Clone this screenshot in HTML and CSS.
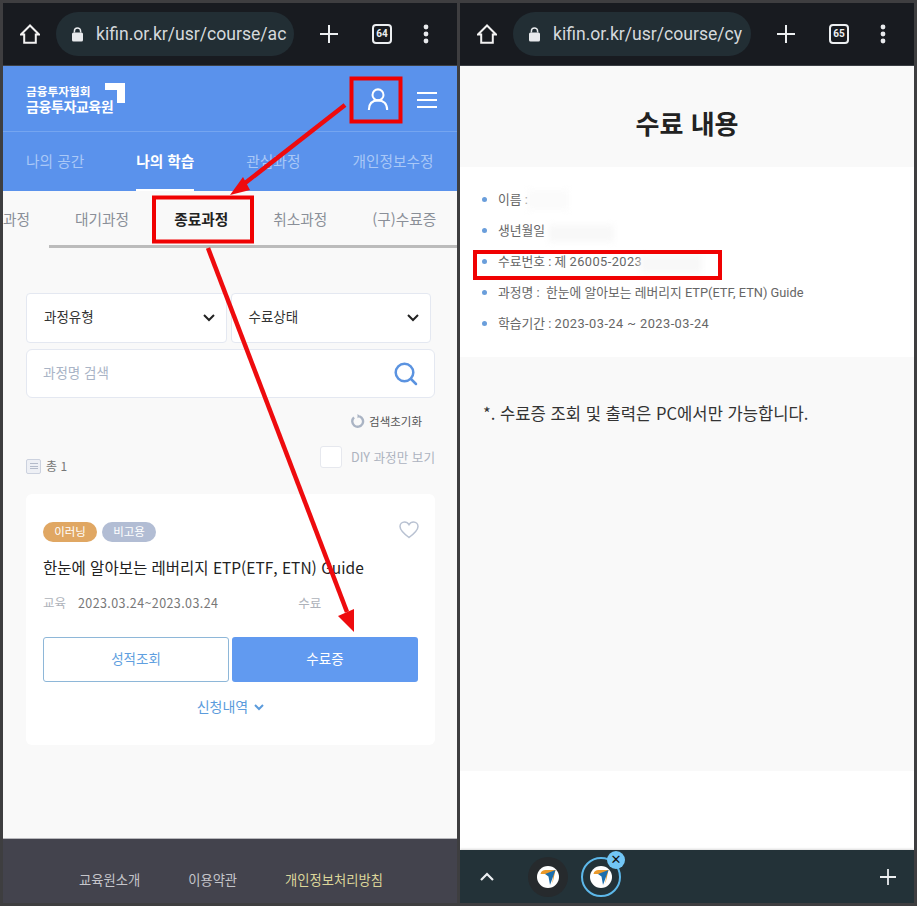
FILE: index.html
```html
<!DOCTYPE html>
<html lang="ko">
<head>
<meta charset="utf-8">
<title>수료 내용</title>
<link rel="stylesheet" href="styles.css">
</head>
<body>
<svg width="0" height="0" class="defs">
  <defs>
    <g id="home"><path d="M10 1.500 1 10.500h3.200v8.200h11.600v-8.200H19z" fill="none" stroke="#f2f2f2" stroke-width="2" stroke-linejoin="miter"/></g>
    <g id="lock"><path d="M3.400 5.500V4a3.100 3.100 0 0 1 6.200 0v1.500" fill="none" stroke="#e8eaed" stroke-width="1.500"/><rect x="1" y="5.500" width="11" height="9" rx="1.500" fill="#e8eaed"/></g>
    <g id="plus"><path d="M9 0v18M0 9h18" stroke="#eceff1" stroke-width="2" fill="none"/></g>
    <g id="dots"><circle cx="3" cy="3" r="2.400" fill="#e8eaed"/><circle cx="3" cy="10" r="2.400" fill="#e8eaed"/><circle cx="3" cy="17" r="2.400" fill="#e8eaed"/></g>
    <g id="fav"><circle cx="11" cy="11" r="11" fill="#fff"/><path d="M3.500 8C4 5 6 4 8.500 4h10L16 15l-2.500 5c2-3 3-8 2-12H8z" fill="#ea9a2c"/><path d="M18.500 4 13 19l-1.500-8.500L8 8z" fill="#1d6fae"/></g>
    <g id="chev"><path d="M1 1l5 5 5-5" fill="none" stroke="#222" stroke-width="2"/></g>
  </defs>
</svg>

<main class="shots">
  <section class="phone">
    <header class="toolbar">
      <svg class="ic-home" width="20" height="20" viewBox="0 0 20 20"><use href="#home"/></svg>
      <div class="url">
        <svg class="ic-lock" width="13" height="15" viewBox="0 0 13 15"><use href="#lock"/></svg>
        <span class="url-text">kifin.or.kr/usr/course/ac</span>
      </div>
      <svg class="ic-plus" width="18" height="18" viewBox="0 0 18 18"><use href="#plus"/></svg>
      <span class="tabcount">64</span>
      <svg class="ic-dots" width="6" height="20" viewBox="0 0 6 20"><use href="#dots"/></svg>
    </header>

    <div class="site-head">
      <div class="logo">
        <div class="logo-text">
          <span class="logo-small">금융투자협회</span>
          <span class="logo-big">금융투자교육원</span>
        </div>
        <svg class="logo-mark" width="20" height="20" viewBox="0 0 20 20"><path d="M0 0h20v20h-8V7H0z" fill="#fff"/></svg>
      </div>
      <div class="head-icons">
        <svg width="22" height="22" viewBox="0 0 24 24" fill="none" stroke="#fff" stroke-width="2.200"><circle cx="12" cy="7.500" r="6"/><path d="M2 24c0-7 4-10.500 10-10.500S22 17 22 24"/></svg>
        <div class="burger"><i></i><i></i><i></i></div>
      </div>
    </div>

    <nav class="main-nav">
      <a>나의 공간</a>
      <a class="on">나의 학습</a>
      <a>관심과정</a>
      <a>개인정보수정</a>
    </nav>

    <div class="sub-wrap">
      <nav class="sub-nav">
        <a class="clip">수강과정</a>
        <a>대기과정</a>
        <a class="on">종료과정</a>
        <a>취소과정</a>
        <a>(구)수료증</a>
      </nav>
      <div class="sub-bar"></div>
    </div>

    <div class="content">
      <div class="selects">
        <div class="select"><span>과정유형</span><svg width="12" height="8" viewBox="0 0 12 8"><use href="#chev"/></svg></div>
        <div class="select"><span>수료상태</span><svg width="12" height="8" viewBox="0 0 12 8"><use href="#chev"/></svg></div>
      </div>
      <div class="search">
        <span>과정명 검색</span>
        <svg width="24" height="24" viewBox="0 0 24 24" fill="none" stroke="#5b93e0" stroke-width="2.500"><circle cx="10.500" cy="10.500" r="8.800"/><path d="M17 17l5 5" stroke-linecap="round"/></svg>
      </div>
      <div class="reset">
        <svg width="14" height="14" viewBox="0 0 14 14" fill="none" stroke="#aab4c4" stroke-width="2.400"><path d="M8.500 2.300A5.400 5.400 0 1 1 3 3.400"/><path d="M6.500 0l3 2.300-3 2z" fill="#aab4c4" stroke="none"/></svg>
        <span>검색초기화</span>
      </div>
      <div class="tools">
        <div class="total">
          <span class="total-ic"><i></i><i></i><i></i></span>
          <span>총 1</span>
        </div>
        <div class="diy"><span class="check"></span><span>DIY 과정만 보기</span></div>
      </div>

      <article class="card">
        <div class="card-top">
          <div class="tags"><span class="tag t1">이러닝</span><span class="tag t2">비고용</span></div>
          <svg class="heart" width="20" height="18" viewBox="0 0 20 18" fill="none" stroke="#b9c2d2" stroke-width="1.500"><path d="M10 16.500C4 12 1 9 1 5.500 1 3 3 1 5.500 1 7.500 1 9 2 10 3.700 11 2 12.500 1 14.500 1 17 1 19 3 19 5.500 19 9 16 12 10 16.500z"/></svg>
        </div>
        <h2 class="card-title">한눈에 알아보는 레버리지 ETP(ETF, ETN) Guide</h2>
        <div class="meta">
          <span class="meta-k">교육</span><span class="meta-v">2023.03.24~2023.03.24</span><span class="meta-k meta-end">수료</span>
        </div>
        <div class="actions">
          <a class="btn line">성적조회</a>
          <a class="btn fill">수료증</a>
        </div>
        <a class="more">신청내역<svg width="10" height="7" viewBox="0 0 10 7"><path d="M1 1l4 4 4-4" fill="none" stroke="#5b9bdc" stroke-width="2"/></svg></a>
      </article>
    </div>

    <footer class="site-foot">
      <a>교육원소개</a><a>이용약관</a><a class="hi">개인정보처리방침</a>
    </footer>
  </section>

  <section class="phone">
    <header class="toolbar">
      <svg class="ic-home" width="20" height="20" viewBox="0 0 20 20"><use href="#home"/></svg>
      <div class="url">
        <svg class="ic-lock" width="13" height="15" viewBox="0 0 13 15"><use href="#lock"/></svg>
        <span class="url-text">kifin.or.kr/usr/course/cy</span>
      </div>
      <svg class="ic-plus" width="18" height="18" viewBox="0 0 18 18"><use href="#plus"/></svg>
      <span class="tabcount">65</span>
      <svg class="ic-dots" width="6" height="20" viewBox="0 0 6 20"><use href="#dots"/></svg>
    </header>

    <div class="cert-title"><h1>수료 내용</h1></div>
    <ul class="cert-list">
      <li>이름 :</li>
      <li>생년월일</li>
      <li>수료번호 : 제 <span class="num">26005-2023</span></li>
      <li>과정명 :&nbsp; 한눈에 알아보는 레버리지 ETP(ETF, ETN) Guide</li>
      <li>학습기간 : <span class="num">2023-03-24 ~ 2023-03-24</span></li>
    </ul>
    <div class="cert-note"><p>*. 수료증 조회 및 출력은 PC에서만 가능합니다.</p></div>
    <div class="cert-blank"></div>
    <footer class="tabbar">
      <svg class="tb-up" width="14" height="9" viewBox="0 0 14 9"><path d="M1 8l6-6 6 6" fill="none" stroke="#eceff1" stroke-width="2.200"/></svg>
      <span class="tb-tab"><svg width="22" height="22" viewBox="0 0 22 22"><use href="#fav"/></svg></span>
      <span class="tb-tab active"><svg width="22" height="22" viewBox="0 0 22 22"><use href="#fav"/></svg>
        <span class="tb-close">✕</span></span>
      <svg class="tb-plus" width="16" height="16" viewBox="0 0 18 18"><use href="#plus"/></svg>
    </footer>
  </section>
</main>

<span class="smudge s1"></span>
<span class="smudge s2"></span>
<span class="smudge s3"></span>

<svg class="marks" width="917" height="906" viewBox="0 0 917 906">
  <g fill="none" stroke="#f00102" stroke-width="4">
    <rect x="351.500" y="78.500" width="49" height="43"/>
    <rect x="154" y="197.500" width="98" height="44"/>
    <rect x="475" y="252" width="245" height="26"/>
  </g>
  <path d="M345 105 240 187" stroke="#ee0b0e" stroke-width="4.500" fill="none"/>
  <path d="M230 195 243 177 250 190z" fill="#ee0b0e"/>
  <path d="M208 248 347 612" stroke="#ee0b0e" stroke-width="4.500" fill="none"/>
  <path d="M354 632 338 616 354 609z" fill="#ee0b0e"/>
</svg>
</body>
</html>
```
FILE: styles.css
```css
* { box-sizing: border-box; }
html, body { margin: 0; padding: 0; }
body {
  width: 917px;
  height: 906px;
  overflow: hidden;
  background: #3e3e40;
  font-family: "Noto Sans CJK KR", "Noto Sans", sans-serif;
  position: relative;
}
.defs { position: absolute; }
a { display: block; }

.shots { display: flex; gap: 3px; padding: 3px; height: 906px; }
.phone {
  width: 454px;
  height: 900px;
  display: flex;
  flex-direction: column;
  overflow: hidden;
  background: #f9f9f9;
}

/* browser toolbar */
.toolbar {
  flex: none;
  height: 63px;
  background: #181b20;
  border-bottom: 1px solid #3b3f44;
  display: flex;
  align-items: center;
  color: #e8eaed;
}
.ic-home { margin-left: 17px; flex: none; }
.url {
  flex: none;
  margin-left: 16px;
  width: 238px;
  height: 44px;
  border-radius: 22px;
  background: #222e34;
  display: flex;
  align-items: center;
  padding-left: 15px;
  overflow: hidden;
}
.ic-lock { flex: none; }
.url-text {
  margin-left: 12px;
  font: 400 17.600px "Roboto", sans-serif;
  color: #d5d9dc;
  white-space: nowrap;
}
.ic-plus { margin-left: 26px; flex: none; }
.tabcount {
  margin-left: 34px;
  width: 20px;
  height: 20px;
  flex: none;
  border: 2px solid #eceff1;
  border-radius: 4px;
  font: 700 10px/16px "Roboto", sans-serif;
  text-align: center;
  color: #eceff1;
}
.ic-dots { margin-left: 31px; flex: none; }

/* site header */
.site-head {
  flex: none;
  height: 66px;
  background: #5a92ec;
  border-bottom: 1px solid #75a5f0;
  display: flex;
  align-items: center;
  justify-content: space-between;
  padding: 0 20px 0 23px;
}
.logo { display: flex; align-items: flex-start; }
.logo-text { display: flex; flex-direction: column; color: #fff; font-weight: 700; }
.logo-small { font-size: 11.700px; line-height: 15px; }
.logo-big { font-size: 14.100px; line-height: 17px; letter-spacing: -0.500px; }
.logo-mark { margin-left: -8px; }
.head-icons { display: flex; align-items: center; gap: 28px; }
.burger { width: 20px; display: flex; flex-direction: column; gap: 5px; padding-top: 3px; }
.burger i { display: block; height: 2px; background: #fff; }

.main-nav {
  flex: none;
  height: 59px;
  background: #5a92ec;
  display: flex;
  gap: 52px;
  padding-left: 23px;
  font-size: 14.700px;
  line-height: 58px;
  color: #a9c8f7;
  white-space: nowrap;
}
.main-nav a.on { color: #fff; font-weight: 700; position: relative; }
.main-nav a.on::after {
  content: "";
  position: absolute;
  left: 0;
  right: 0;
  bottom: 0;
  height: 2px;
  background: #fff;
}

.sub-wrap { flex: none; height: 58px; overflow: hidden; }
.sub-nav {
  display: flex;
  gap: 45px;
  height: 54px;
  margin-left: -27px;
  font-size: 14.700px;
  line-height: 55px;
  color: #8a8f98;
  white-space: nowrap;
}
.sub-nav a.on { color: #222; font-weight: 700; }
.sub-bar { height: 3px; margin-left: 46px; background: #bcbcbc; }

/* filter */
.content { flex: 1; padding: 44px 22px 0 23px; display: flex; flex-direction: column; }
.selects { display: flex; gap: 4px; padding-right: 4px; }
.select {
  flex: 1;
  height: 50px;
  background: #fff;
  border: 1px solid #e4e8f1;
  border-radius: 4px;
  padding: 0 11px 4px 17px;
  display: flex;
  align-items: center;
  justify-content: space-between;
  font-size: 13.500px;
  color: #333;
}
.select svg { margin-top: 4px; }
.search {
  margin-top: 6px;
  height: 49px;
  background: #fff;
  border: 1px solid #e4e8f1;
  border-radius: 6px;
  padding: 0 16px;
  display: flex;
  align-items: center;
  justify-content: space-between;
  font-size: 13.500px;
  color: #a9b4c6;
}
.search span { margin-bottom: 4px; }
.reset {
  margin-top: 15px;
  padding-right: 13px;
  display: flex;
  justify-content: flex-end;
  align-items: center;
  gap: 4px;
  font-size: 11.500px;
  line-height: 16px;
  color: #555;
}
.tools {
  margin-top: 17px;
  display: flex;
  justify-content: space-between;
  align-items: flex-end;
  font-size: 12px;
  color: #8a8f98;
}
.total { display: flex; align-items: center; gap: 5px; color: #777; line-height: 18px; margin-bottom: -7px; }
.total-ic {
  width: 15px;
  height: 15px;
  border: 1.500px solid #ccd2df;
  border-radius: 2px;
  background: #eef0f5;
  display: flex;
  flex-direction: column;
  justify-content: center;
  gap: 1.500px;
  padding: 0 2.500px;
}
.total-ic i { height: 1px; background: #b4bbca; display: block; }
.diy { display: flex; align-items: center; gap: 9px; color: #adb3bf; line-height: 22px; font-size: 12.600px; }
.check {
  width: 22px;
  height: 22px;
  background: #fff;
  border: 1px solid #e6e8ee;
  border-radius: 3px;
}

/* card */
.card {
  margin-top: 26px;
  height: 251px;
  background: #fff;
  border-radius: 6px;
  padding: 28px 17px 0 17px;
}
.card-top { display: flex; justify-content: space-between; align-items: flex-start; height: 21px; }
.heart { margin: -1px -1px 0 0; }
.tags { display: flex; gap: 5px; }
.tag {
  width: 54px;
  height: 20px;
  border-radius: 10px;
  text-align: center;
  font-size: 11.500px;
  line-height: 19px;
  color: #fff;
}
.t1 { background: #e0a763; }
.t2 { background: #b2bdd4; }
.card-title {
  margin: 13px 0 0;
  font-size: 15.500px;
  font-weight: 400;
  line-height: 22px;
  color: #222;
  white-space: nowrap;
}
.meta { margin-top: 16px; display: flex; font-size: 12.500px; line-height: 18px; color: #777; }
.meta-k { color: #aeb2ba; }
.meta-v { margin-left: 12px; letter-spacing: 0.400px; }
.meta-end { margin-left: 80px; }
.actions { margin-top: 25px; display: grid; grid-template-columns: 1fr 1fr; gap: 3px; }
.btn {
  height: 45px;
  border-radius: 3px;
  text-align: center;
  font-size: 13.500px;
  line-height: 41px;
}
.line { background: #fff; border: 1px solid #8eb7d8; color: #5f9fe0; }
.fill { background: #619af0; color: #fff; line-height: 43px; }
.more {
  margin-top: 13px;
  display: flex;
  justify-content: center;
  align-items: center;
  gap: 6px;
  font-size: 14px;
  line-height: 22px;
  color: #5b9bdc;
}
.more svg { margin-top: 2px; }

/* footer */
.site-foot {
  flex: none;
  height: 65px;
  background: #43434d;
  border-top: 1px solid #b8b8bc;
  display: flex;
  gap: 48px;
  padding-left: 76px;
  font-size: 13.300px;
  line-height: 81px;
  color: #c5c5ca;
}
.site-foot .hi { color: #dcd69a; }

/* certificate */
.cert-title { flex: none; height: 101px; background: #f9f9f9; }
.cert-title h1 {
  margin: 0;
  text-align: center;
  font-size: 26px;
  font-weight: 700;
  line-height: 114px;
  color: #222;
}
.cert-list {
  flex: none;
  height: 190px;
  margin: 0;
  padding: 17px 0 0 38px;
  list-style: none;
  background: #fff;
  font-family: "Roboto", "Noto Sans CJK KR", sans-serif;
  font-size: 12.800px;
  line-height: 31px;
  color: #666;
}
.cert-list li { position: relative; white-space: nowrap; }
.cert-list li::before {
  content: "";
  position: absolute;
  left: -16px;
  top: 13px;
  width: 5px;
  height: 5px;
  border-radius: 50%;
  background: #6a9edb;
}
.num { letter-spacing: 0.450px; }
.cert-note {
  flex: none;
  height: 414px;
  background: #f9f9f9;
  padding: 44px 0 0 23px;
  font-size: 16.600px;
  line-height: 24px;
  color: #333;
}
.cert-note p { margin: 0; }
.cert-blank { flex: 1; background: #fff; }
.tabbar {
  flex: none;
  height: 53px;
  background: #233238;
  display: flex;
  align-items: center;
  position: relative;
  box-shadow: 0 -1px 2px rgba(0,0,0,.15);
}
.tb-up { margin-left: 20px; flex: none; }
.tb-tab {
  width: 40px;
  height: 40px;
  border-radius: 50%;
  background: #262a2d;
  margin-left: 34px;
  display: flex;
  align-items: center;
  justify-content: center;
  position: relative;
  flex: none;
}
.tb-tab.active { background: transparent; border: 2px solid #5db8ea; margin-left: 13px; }
.tb-close {
  position: absolute;
  right: -6px;
  top: -8px;
  width: 18px;
  height: 18px;
  border-radius: 50%;
  background: #72c6f5;
  color: #111;
  font: 700 13px/18px "DejaVu Sans", sans-serif;
  text-align: center;
}
.tb-plus { margin-left: auto; margin-right: 18px; }

/* overlays */
.smudge { position: absolute; background: #f8f8f8; filter: blur(3px); }
.s1 { left: 527px; top: 190px; width: 42px; height: 20px; background: #fbfbfb; }
.s2 { left: 548px; top: 225px; width: 66px; height: 17px; }
.s3 { left: 640px; top: 255px; width: 62px; height: 18px; }
.marks { position: absolute; left: 0; top: 0; pointer-events: none; }
```
